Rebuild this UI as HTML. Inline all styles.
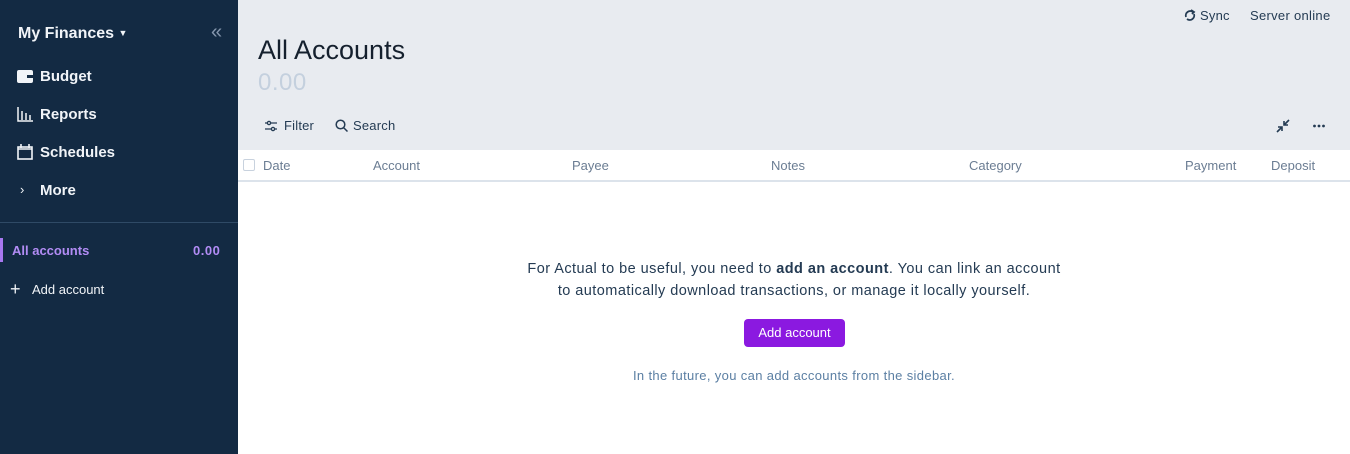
<!DOCTYPE html>
<html><head><meta charset="utf-8"><style>
*{box-sizing:border-box;margin:0;padding:0}
body{width:1350px;height:454px;overflow:hidden;font-family:"Liberation Sans",sans-serif;background:#fff;position:relative}
.sb{position:absolute;left:0;top:0;width:238px;height:454px;background:#132a43;color:#f1f4f8}
.sb .t{position:absolute;font-size:15px;font-weight:bold}
.main{position:absolute;left:238px;top:0;right:0;height:454px}
.hd{position:absolute;left:0;top:0;right:0;height:150px;background:#e8ebf0}
.a{position:absolute;white-space:nowrap}
.col{position:absolute;top:158px;font-size:13px;color:#6b7d93}
</style></head><body>
<div class="sb">
  <div class="t" style="left:18px;top:25px;font-size:16px">My Finances <span style="font-size:9px;vertical-align:2px">▼</span></div>
  <div class="a" style="left:211px;top:21px;font-size:20px;color:#8596ad">«</div>
  <svg class="a" style="left:17px;top:70px" width="16" height="13"><rect x="0" y="0" width="16" height="13" rx="2" fill="#f1f4f8"/><rect x="10" y="5" width="6" height="3" fill="#132a43"/></svg>
  <div class="t" style="left:40px;top:68px">Budget</div>
  <svg class="a" style="left:17px;top:107px" width="16" height="15" fill="none" stroke="#f1f4f8" stroke-width="1.5"><path d="M1 0V14H16M5 4V13M9 6V13M13 8V13"/></svg>
  <div class="t" style="left:40px;top:106px">Reports</div>
  <svg class="a" style="left:17px;top:144px" width="16" height="16" fill="none" stroke="#f1f4f8" stroke-width="1.6"><rect x="1" y="3" width="14" height="12"/><path d="M4 0V4M12 0V4M1 5H15"/></svg>
  <div class="t" style="left:40px;top:144px">Schedules</div>
  <div class="a" style="left:20px;top:182px;font-size:13px">›</div>
  <div class="t" style="left:40px;top:182px">More</div>
  <div class="a" style="left:0;top:222px;width:238px;height:1px;background:#2f4a66"></div>
  <div class="a" style="left:0;top:238px;width:3px;height:24px;background:#a878f0"></div>
  <div class="a" style="left:12px;top:243px;font-size:13px;font-weight:bold;color:#b28cf5">All accounts</div>
  <div class="a" style="left:193px;top:243px;font-size:13px;font-weight:bold;color:#b28cf5;letter-spacing:0.5px">0.00</div>
  <div class="a" style="left:10px;top:279px;font-size:18px;font-weight:300">+</div>
  <div class="a" style="left:32px;top:282px;font-size:13px">Add account</div>
</div>
<div class="main">
  <div class="hd"></div>
  <svg class="a" style="left:946px;top:9px" width="12" height="13" fill="none" stroke="#243b53" stroke-width="1.8"><path d="M9 3A4.5 4.5 0 0 0 2 8M3 10A4.5 4.5 0 0 0 10 5"/><path d="M7 1L10 3L8 5" /></svg>
  <div class="a" style="left:962px;top:8px;font-size:13px;color:#243b53;letter-spacing:0.2px">Sync</div>
  <div class="a" style="left:1012px;top:8px;font-size:13px;color:#243b53;letter-spacing:0.3px">Server online</div>
  <div class="a" style="left:20px;top:35px;font-size:27px;color:#15202e">All Accounts</div>
  <div class="a" style="left:20px;top:69px;font-size:24px;color:#c4d0de;letter-spacing:0.5px">0.00</div>
  <svg class="a" style="left:27px;top:120px" width="12" height="12" stroke="#243b53" stroke-width="1.3" fill="none"><path d="M0 3H12M0 9H12"/><circle cx="4" cy="3" r="1.6" fill="#e8ebf0"/><circle cx="8" cy="9" r="1.6" fill="#e8ebf0"/></svg>
  <div class="a" style="left:46px;top:118px;font-size:13px;color:#243b53;letter-spacing:0.2px">Filter</div>
  <svg class="a" style="left:97px;top:119px" width="13" height="13" stroke="#243b53" stroke-width="1.5" fill="none"><circle cx="5.5" cy="5.5" r="4.3"/><path d="M8.6 8.6L12.5 12.5"/></svg>
  <div class="a" style="left:115px;top:118px;font-size:13px;color:#243b53;letter-spacing:0.2px">Search</div>
  <svg class="a" style="left:1038px;top:119px" width="14" height="14" stroke="#243b53" stroke-width="1.6" fill="none"><path d="M13 1L8 6M8 2V6H12M1 13L6 8M2 8H6V12"/></svg>
  <svg class="a" style="left:1075px;top:124px" width="12" height="4" fill="#243b53"><circle cx="1.5" cy="2" r="1.4"/><circle cx="6" cy="2" r="1.4"/><circle cx="10.5" cy="2" r="1.4"/></svg>
  <div class="a" style="left:5px;top:159px;width:12px;height:12px;border:1px solid #c8d2de;border-radius:2px"></div>
  <div class="col" style="left:25px">Date</div>
  <div class="col" style="left:135px">Account</div>
  <div class="col" style="left:334px">Payee</div>
  <div class="col" style="left:533px">Notes</div>
  <div class="col" style="left:731px">Category</div>
  <div class="col" style="left:947px">Payment</div>
  <div class="col" style="left:1033px">Deposit</div>
  <div class="a" style="left:0;top:180px;right:0;height:2px;background:#dce3eb"></div>
  <div class="a" style="left:0;width:1112px;top:258px;text-align:center;font-size:14.5px;letter-spacing:0.45px;line-height:22px;color:#243b53">For Actual to be useful, you need to <b>add an account</b>. You can link an account<br>to automatically download transactions, or manage it locally yourself.</div>
  <div class="a" style="left:506px;top:319px;width:101px;height:28px;background:#8b19e0;border-radius:4px;color:#fff;font-size:13px;text-align:center;line-height:28px">Add account</div>
  <div class="a" style="left:0;width:1112px;top:368px;text-align:center;font-size:13px;letter-spacing:0.35px;color:#5b7fa3">In the future, you can add accounts from the sidebar.</div>
</div>
</body></html>
